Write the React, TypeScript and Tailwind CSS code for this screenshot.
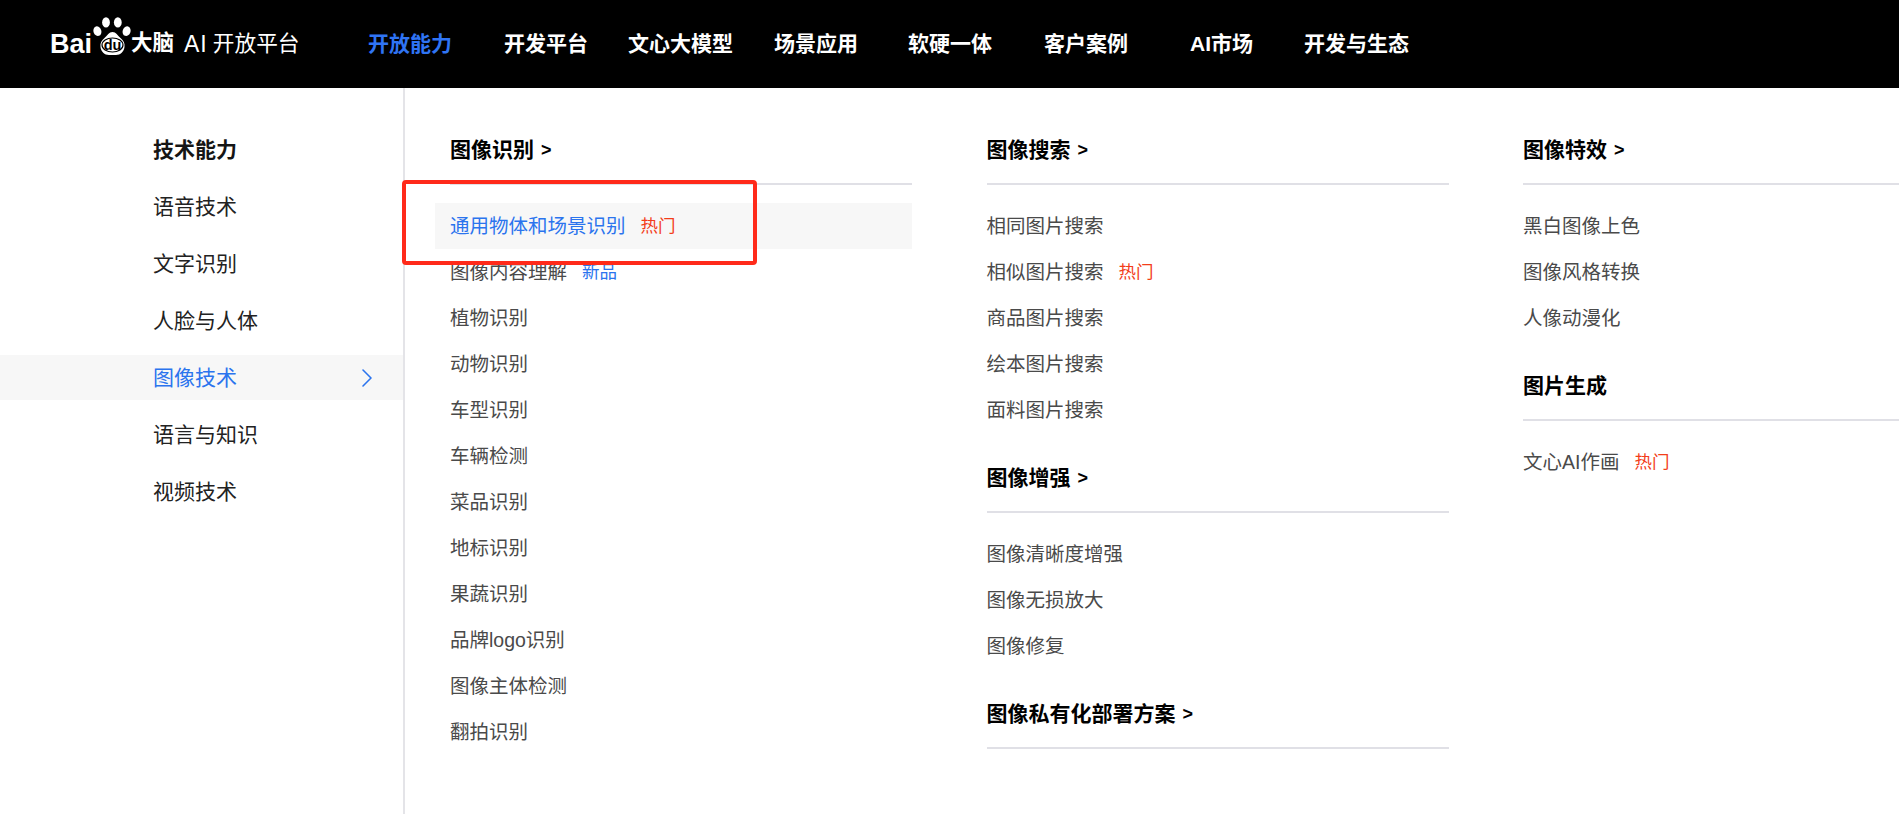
import {ChevronRight} from 'lucide-react';

type Item = {label: string; tag?: 'hot' | 'new'; active?: boolean};
type Section = {title: string; arrow?: boolean; items: Item[]};

const navItems = [
    {label: '开放能力', className: 'ml-0 text-[#2f74f4]'},
    {label: '开发平台', className: 'ml-[52px] text-white'},
    {label: '文心大模型', className: 'ml-[40px] text-white'},
    {label: '场景应用', className: 'ml-[41px] text-white'},
    {label: '软硬一体', className: 'ml-[50px] text-white'},
    {label: '客户案例', className: 'ml-[52px] text-white'},
    {label: 'AI市场', className: 'ml-[62px] text-white'},
    {label: '开发与生态', className: 'ml-[51px] text-white'},
];

const sideItems = ['语音技术', '文字识别', '人脸与人体', '图像技术', '语言与知识', '视频技术'];

const columns: Section[][] = [
    [
        {
            title: '图像识别',
            arrow: true,
            items: [
                {label: '通用物体和场景识别', tag: 'hot', active: true},
                {label: '图像内容理解', tag: 'new'},
                {label: '植物识别'},
                {label: '动物识别'},
                {label: '车型识别'},
                {label: '车辆检测'},
                {label: '菜品识别'},
                {label: '地标识别'},
                {label: '果蔬识别'},
                {label: '品牌logo识别'},
                {label: '图像主体检测'},
                {label: '翻拍识别'},
            ],
        },
    ],
    [
        {
            title: '图像搜索',
            arrow: true,
            items: [
                {label: '相同图片搜索'},
                {label: '相似图片搜索', tag: 'hot'},
                {label: '商品图片搜索'},
                {label: '绘本图片搜索'},
                {label: '面料图片搜索'},
            ],
        },
        {
            title: '图像增强',
            arrow: true,
            items: [{label: '图像清晰度增强'}, {label: '图像无损放大'}, {label: '图像修复'}],
        },
        {title: '图像私有化部署方案', arrow: true, items: []},
    ],
    [
        {
            title: '图像特效',
            arrow: true,
            items: [{label: '黑白图像上色'}, {label: '图像风格转换'}, {label: '人像动漫化'}],
        },
        {
            title: '图片生成',
            items: [{label: '文心AI作画', tag: 'hot'}],
        },
    ],
];

const BaiduPaw = () => (
    <svg viewBox="0 0 38 38" className="w-[38px] h-[38px] mb-[17px] shrink-0">
        <ellipse cx="4.4" cy="14.2" rx="3.9" ry="4.9" fill="#fff" transform="rotate(-18 4.4 14.2)" />
        <ellipse cx="13" cy="5.4" rx="3.9" ry="5.2" fill="#fff" />
        <ellipse cx="24.8" cy="5.4" rx="3.9" ry="5.2" fill="#fff" />
        <ellipse cx="33.6" cy="14.2" rx="3.9" ry="4.9" fill="#fff" transform="rotate(18 33.6 14.2)" />
        <path
            d="M19.5 15c3.5 0 5 3.5 8 6 3 2.5 4.5 5 4 9-.6 4.6-4 8-8.5 8h-7c-4.5 0-8-3.4-8.5-8-.5-4 1-6.5 4-9 3-2.5 4.5-6 8-6z"
            fill="#fff"
        />
        <ellipse cx="19.5" cy="28" rx="10.5" ry="7" fill="none" stroke="#000" strokeWidth="1.2" />
        <text
            x="19.5"
            y="33"
            textAnchor="middle"
            fontSize="14.5"
            fontWeight="700"
            fontFamily="Liberation Sans, sans-serif"
            fill="#000">
            du
        </text>
    </svg>
);

const MenuRow = ({item}: {item: Item}) => (
    <a
        className={`flex items-center h-[46px] text-[19.5px] leading-[46px] ${
            item.active ? '-ml-[15px] pl-[15px] bg-[#f7f7f7] text-[#2b74ee]' : 'text-[#4a4a4a]'
        }`}>
        {item.label}
        {item.tag === 'hot' && <span className="ml-[15px] text-[17.5px] text-[#f33e1a]">热门</span>}
        {item.tag === 'new' && <span className="ml-[15px] text-[17.5px] text-[#2b74ee]">新品</span>}
    </a>
);

const MenuSection = ({section}: {section: Section}) => (
    <div className="mb-[27px]">
        <div className="flex items-center h-[36px] text-[21px] font-bold text-black">
            {section.title}
            {section.arrow && <span className="ml-[7px] text-[18px]">&gt;</span>}
        </div>
        <div className="mt-[15px] mb-[18px] h-[2px] bg-[#e0e0e6]" />
        {section.items.map((item) => (
            <MenuRow key={item.label} item={item} />
        ))}
    </div>
);

export default function App() {
    return (
        <div
            className="flex flex-col h-screen overflow-hidden bg-white relative"
            style={{fontFamily: '"Liberation Sans", "Noto Sans CJK SC", sans-serif'}}>
            <header className="flex items-center h-[88px] shrink-0 bg-black">
                <div className="flex items-center w-[368px] pl-[50px] text-white">
                    <span className="w-[43px] text-[27px] font-bold leading-none">Bai</span>
                    <BaiduPaw />
                    <span className="text-[21.5px] font-bold leading-none">大脑</span>
                    <span className="ml-[10px] text-[23px] leading-none tracking-[1px]">AI</span>
                    <span className="ml-[5px] text-[21.7px] leading-none">开放平台</span>
                </div>
                <nav className="flex items-center text-[21px] font-bold">
                    {navItems.map((nav) => (
                        <a key={nav.label} className={nav.className}>
                            {nav.label}
                        </a>
                    ))}
                </nav>
            </header>

            <main className="flex flex-1 min-h-0">
                <aside className="flex flex-col gap-y-[12px] w-[405px] shrink-0 pt-[39px] border-r-2 border-[#e4e4e8]">
                    <div className="flex items-center h-[45px] pl-[153px] text-[21px] font-bold text-[#151515]">
                        技术能力
                    </div>
                    {sideItems.map((label) =>
                        label === '图像技术' ? (
                            <div
                                key={label}
                                className="flex items-center justify-between h-[45px] pl-[153px] pr-[20px] bg-[#f7f7f7] text-[21px] text-[#2b74ee]">
                                {label}
                                <ChevronRight size={32} strokeWidth={1.2} />
                            </div>
                        ) : (
                            <div key={label} className="flex items-center h-[45px] pl-[153px] text-[21px] text-[#222222]">
                                {label}
                            </div>
                        ),
                    )}
                </aside>

                <div className="flex gap-x-[74.5px] pl-[45px] pt-[44px]">
                    {columns.map((sections) => (
                        <div key={sections[0].title} className="w-[462px] shrink-0">
                            {sections.map((section) => (
                                <MenuSection key={section.title} section={section} />
                            ))}
                        </div>
                    ))}
                </div>
            </main>

            {/* red annotation box drawn over the menu */}
            <div className="absolute left-[402px] top-[180px] w-[355px] h-[85px] rounded-[4px] border-4 border-[#ff2a1a]" />
        </div>
    );
}
